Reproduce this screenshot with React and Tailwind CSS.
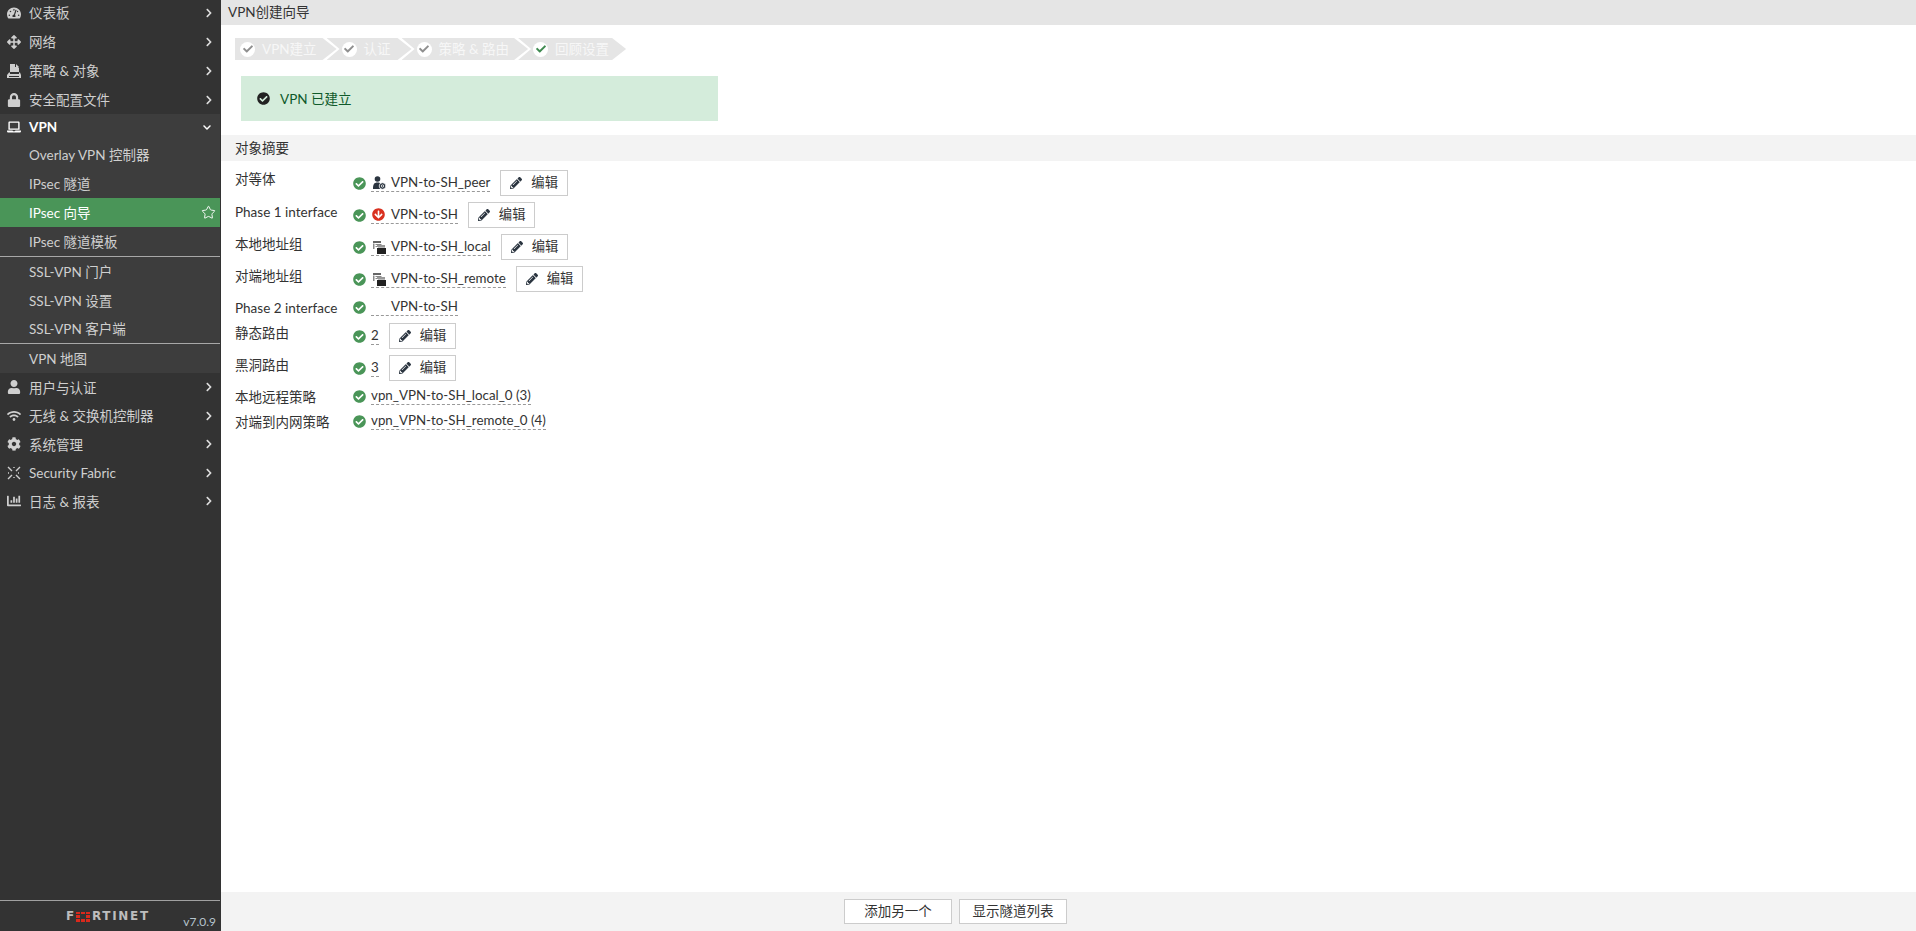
import { Star } from 'lucide-react'
import {
  FaTachometerAlt,
  FaArrowsAlt,
  FaLock,
  FaLaptop,
  FaUser,
  FaWifi,
  FaCog,
  FaChartBar,
  FaChevronRight,
  FaChevronDown,
  FaCheckCircle,
  FaPencilAlt,
  FaArrowCircleDown,
  FaCheck,
} from 'react-icons/fa'

const PolicyIcon = ({ className }) => (
  <svg viewBox="0 0 14 14" className={className} fill="currentColor">
    <path d="M3 0h5v3h3l1 1v4H3z" />
    <path d="M9 0l3 3H9z" />
    <path d="M2 8.500h1v1.500h9V8.500h1l1 2.500v3H0v-3zM2 12h10v1H2z" fillRule="evenodd" />
  </svg>
)

const FabricIcon = ({ className }) => (
  <svg viewBox="0 0 14 14" className={className} stroke="currentColor" strokeWidth="1.4" fill="none">
    <path d="M1 1l4 4M13 1L9 5M1 13l4-4M13 13L9 9" />
    <path d="M7 1v2M7 11v2M1 7h2M11 7h2" strokeDasharray="1 1" />
  </svg>
)

const GroupIcon = () => (
  <svg viewBox="0 0 14 14" className="h-[14px] w-[14px]">
    <path d="M1 1h8v2H1z" fill="#666" />
    <path d="M1 3.500h1.500V9H1zM3.500 4h6v1h-6zM3.500 6h3v1h-3z" fill="#888" />
    <path d="M5 5h8v2H5z" fill="#999" />
    <path d="M5 8h9v6H5z" fill="#222" />
    <path d="M6 7h7v1H6z" fill="#bbb" />
  </svg>
)

const PeerIcon = () => (
  <svg viewBox="0 0 14 14" className="h-[14px] w-[14px]" fill="#2b3540">
    <circle cx="5.5" cy="3" r="2.8" />
    <path d="M1 13c0-4.500 1-6.500 4.500-6.500S8 8 8 9v4z" />
    <circle cx="10.500" cy="10" r="3.300" fill="#2b3540" stroke="#fff" strokeWidth="0.8" />
    <circle cx="10.500" cy="10" r="1.200" fill="none" stroke="#fff" strokeWidth="0.8" />
  </svg>
)

const topItems = [
  { label: '仪表板', icon: FaTachometerAlt },
  { label: '网络', icon: FaArrowsAlt },
  { label: '策略 & 对象', icon: PolicyIcon },
  { label: '安全配置文件', icon: FaLock },
]

const bottomItems = [
  { label: '用户与认证', icon: FaUser },
  { label: '无线 & 交换机控制器', icon: FaWifi },
  { label: '系统管理', icon: FaCog },
  { label: 'Security Fabric', icon: FabricIcon },
  { label: '日志 & 报表', icon: FaChartBar },
]

const MenuItem = ({ item, tall }) => {
  const Icon = item.icon
  return (
    <div className={`flex items-center pl-[7px] pr-[8px] ${tall ? 'h-[29px]' : 'h-[28.5px]'}`}>
      <Icon className="h-[14px] w-[14px] shrink-0" />
      <span className="ml-[8px] flex-1 pt-[1px]">{item.label}</span>
      <FaChevronRight className="h-[10px] w-[8px] text-[#ddd]" />
    </div>
  )
}

const SubItem = ({ label, active, className = 'h-[29px]' }) => (
  <div className={`flex items-center pl-[29px] pr-[4px] ${active ? 'bg-[#4a9558] text-white' : ''} ${className}`}>
    <span className="flex-1 pt-[1px]">{label}</span>
    {active && <Star className="h-[15px] w-[15px] text-white" strokeWidth={1.5} />}
  </div>
)

const Sidebar = () => (
  <aside className="flex h-full w-[221px] shrink-0 flex-col bg-[#333333] text-[13.5px] text-[#cfcfcf]">
    <div className="-mt-[2px]">
      {topItems.map((item) => (
        <MenuItem key={item.label} item={item} tall />
      ))}
    </div>
    <div className="w-[220px] bg-[#3d3d3d]">
      <div className="flex h-[26px] items-center pl-[7px] pr-[8px] font-bold text-white">
        <FaLaptop className="h-[14px] w-[14px] shrink-0" />
        <span className="ml-[8px] flex-1">VPN</span>
        <FaChevronDown className="h-[9px] w-[10px]" />
      </div>
      <div className="h-[1px]" />
      <SubItem label="Overlay VPN 控制器" className="h-[28px]" />
      <SubItem label="IPsec 隧道" />
      <SubItem label="IPsec 向导" active />
      <SubItem label="IPsec 隧道模板" className="h-[30px] border-b border-[#a8a8a8]" />
      <SubItem label="SSL-VPN 门户" />
      <SubItem label="SSL-VPN 设置" />
      <SubItem label="SSL-VPN 客户端" className="h-[29px] border-b border-[#a8a8a8]" />
      <SubItem label="VPN 地图" />
    </div>
    <div>
      {bottomItems.map((item) => (
        <MenuItem key={item.label} item={item} />
      ))}
    </div>
    <div className="mt-auto flex h-[31px] w-[220px] border-t border-[#a0a0a0]">
      <div className="flex flex-1 items-start pl-[66px] pt-[10px]">
        <span className="flex items-center text-[12px] leading-[11px] font-bold tracking-[1.7px] text-[#bdbdbd] [font-family:'DejaVu_Sans',sans-serif]">
          F
          <span className="mr-[2px] grid h-[10px] w-[14px] grid-cols-3 gap-[1px]">
            <i className="bg-[#da291c]" />
            <i className="bg-[#da291c]" />
            <i className="bg-[#da291c]" />
            <i className="bg-[#da291c]" />
            <i className="bg-[#333333]" />
            <i className="bg-[#da291c]" />
            <i className="bg-[#da291c]" />
            <i className="bg-[#da291c]" />
            <i className="bg-[#da291c]" />
          </span>
          RTINET
        </span>
      </div>
      <span className="mr-[4px] self-end pb-[2px] text-[12px] leading-[14px] text-[#b5c3cc]">v7.0.9</span>
    </div>
  </aside>
)

const steps = [
  { label: 'VPN建立', className: 'pl-[5px] pr-[20px] [clip-path:polygon(0_0,calc(100%-14px)_0,100%_50%,calc(100%-14px)_100%,0_100%)]' },
  { label: '认证', className: '-ml-[10px] pl-[15px] pr-[21px] [clip-path:polygon(0_0,calc(100%-14px)_0,100%_50%,calc(100%-14px)_100%,0_100%,13px_50%)]' },
  { label: '策略 & 路由', className: '-ml-[10px] pl-[15px] pr-[19px] [clip-path:polygon(0_0,calc(100%-14px)_0,100%_50%,calc(100%-14px)_100%,0_100%,13px_50%)]' },
  { label: '回顾设置', className: '-ml-[10px] pl-[15px] pr-[17px] [clip-path:polygon(0_0,calc(100%-14px)_0,100%_50%,calc(100%-14px)_100%,0_100%,13px_50%)]' },
]

const StepBar = () => (
  <div className="ml-[14px] mt-[13px] flex h-[22px]">
    {steps.map((step, i) => (
      <div key={step.label} className={`flex items-center bg-[#e5e5e5] text-[13.5px] text-[#f7f7f7] ${step.className}`}>
        <span className="flex h-[15px] w-[15px] items-center justify-center rounded-full bg-white">
          <FaCheck className={`h-[10px] w-[10px] ${i === 3 ? 'text-[#3f8a50]' : 'text-[#8f8f8f]'}`} />
        </span>
        <span className="ml-[7px]">{step.label}</span>
      </div>
    ))}
  </div>
)

const Ok = () => <FaCheckCircle className="h-[13px] w-[13px] shrink-0 text-[#4a9558]" />

const EditButton = () => (
  <button className="ml-[10px] flex h-[26px] items-center border border-[#ccc] bg-white px-[9px] text-[13.33px] text-[#333]">
    <FaPencilAlt className="h-[12px] w-[12px] text-[#2b3540]" />
    <span className="ml-[9px]">编辑</span>
  </button>
)

const Linked = ({ icon, children }) => (
  <span className="ml-[5px] flex h-[18px] items-center border-b border-dashed border-[#999] text-[13.33px]">
    {icon !== undefined && <span className="flex w-[20px] items-center pl-[1px]">{icon}</span>}
    {children}
  </span>
)

const rows = [
  { label: '对等体', icon: <PeerIcon />, value: 'VPN-to-SH_peer', edit: true, labelClass: 'leading-[18px]' },
  {
    label: 'Phase 1 interface',
    icon: <FaArrowCircleDown className="h-[13px] w-[13px] text-[#d9301f]" />,
    value: 'VPN-to-SH',
    edit: true,
  },
  { label: '本地地址组', icon: <GroupIcon />, value: 'VPN-to-SH_local', edit: true },
  { label: '对端地址组', icon: <GroupIcon />, value: 'VPN-to-SH_remote', edit: true },
  { label: 'Phase 2 interface', icon: <span />, value: 'VPN-to-SH', rowClass: 'mb-[1px]' },
  { label: '静态路由', value: '2', edit: true },
  { label: '黑洞路由', value: '3', edit: true },
  { label: '本地远程策略', value: 'vpn_VPN-to-SH_local_0 (3)', rowClass: 'mb-[1px]' },
  { label: '对端到内网策略', value: 'vpn_VPN-to-SH_remote_0 (4)' },
]

const SummaryRow = ({ row }) => (
  <div className={`flex ${row.edit ? 'h-[26px]' : 'h-[18px]'} ${row.rowClass || ''}`}>
    <div className={`w-[118px] shrink-0 ${row.labelClass || 'leading-[20px]'}`}>{row.label}</div>
    <div className={`flex ${row.edit ? 'items-center' : 'h-[18px] items-center'}`}>
      <Ok />
      <Linked icon={row.icon}>{row.value}</Linked>
      {row.edit && <EditButton />}
    </div>
  </div>
)

const App = () => (
  <div className="flex h-[931px] w-[1916px] overflow-hidden bg-white text-[13.5px] text-[#333] [font-family:Lato,'Noto_Sans_CJK_SC',sans-serif]">
    <Sidebar />
    <main className="flex min-w-0 flex-1 flex-col">
      <header className="flex h-[25px] shrink-0 items-center bg-[#e5e5e5] pl-[7px]">VPN创建向导</header>
      <div className="flex-1">
        <StepBar />
        <div className="ml-[20px] mt-[16px] flex h-[45px] w-[477px] items-center bg-[#d4ecdb] pl-[16px] text-[#0f5a2b]">
          <FaCheckCircle className="h-[13px] w-[13px] text-[#222]" />
          <span className="ml-[10px] pt-[1px]">VPN 已建立</span>
        </div>
        <div className="mt-[14px] flex h-[26px] items-center bg-[#f3f3f3] pl-[14px]">对象摘要</div>
        <div className="mt-[9px] flex flex-col gap-[6px] pl-[14px]">
          {rows.map((row) => (
            <SummaryRow key={row.label} row={row} />
          ))}
        </div>
      </div>
      <footer className="flex h-[39px] shrink-0 items-center justify-center gap-[7px] bg-[#f3f3f3] pr-[226px]">
        <button className="h-[25px] w-[108px] border border-[#ccc] bg-white text-[13.5px]">添加另一个</button>
        <button className="h-[25px] w-[108px] border border-[#ccc] bg-white text-[13.5px]">显示隧道列表</button>
      </footer>
    </main>
  </div>
)

export default App
